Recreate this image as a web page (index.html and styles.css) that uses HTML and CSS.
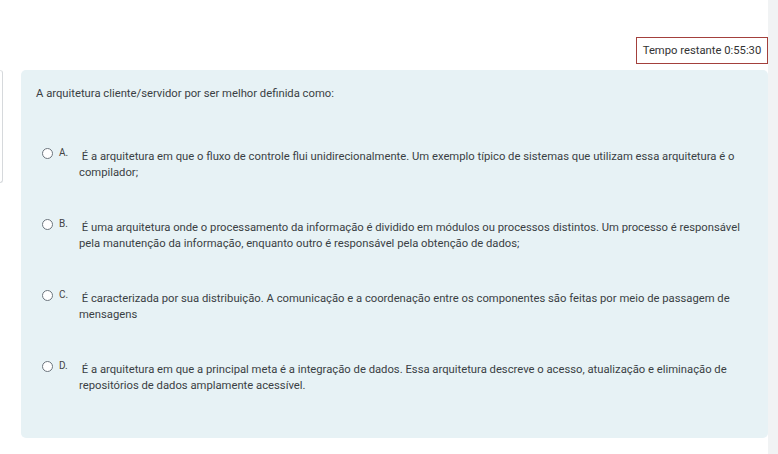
FILE: index.html
```html
<!DOCTYPE html>
<html lang="pt">
<head>
<meta charset="utf-8">
<link rel="stylesheet" href="styles.css">
</head>
<body>
<div class="page">
  <main class="main">
    <div class="topbar">
      <div class="timer">Tempo restante 0:55:30</div>
    </div>
    <div class="content">
      <div class="sidebox"></div>
      <section class="card">
        <p class="question">A arquitetura cliente/servidor por ser melhor definida como:</p>
        <ul class="options">
          <li class="option">
            <span class="radio"></span>
            <span class="letter">A.</span>
            <span class="text">&nbsp;É a arquitetura em que o fluxo de controle flui unidirecionalmente. Um exemplo típico de sistemas que utilizam essa arquitetura é o compilador;</span>
          </li>
          <li class="option">
            <span class="radio"></span>
            <span class="letter">B.</span>
            <span class="text">&nbsp;É uma arquitetura onde o processamento da informação é dividido em módulos ou processos distintos. Um processo é responsável pela manutenção da informação, enquanto outro é responsável pela obtenção de dados;</span>
          </li>
          <li class="option">
            <span class="radio"></span>
            <span class="letter">C.</span>
            <span class="text">&nbsp;É caracterizada por sua distribuição. A comunicação e a coordenação entre os componentes são feitas por meio de passagem de mensagens</span>
          </li>
          <li class="option">
            <span class="radio"></span>
            <span class="letter">D.</span>
            <span class="text">&nbsp;É a arquitetura em que a principal meta é a integração de dados. Essa arquitetura descreve o acesso, atualização e eliminação de repositórios de dados amplamente acessível.</span>
          </li>
        </ul>
      </section>
    </div>
  </main>
  <div class="scrollstrip"></div>
</div>
</body>
</html>
```
FILE: styles.css
```css
html, body {
  margin: 0;
  padding: 0;
  background: #ffffff;
}
body {
  font-family: Roboto, "Liberation Sans", Arial, sans-serif;
  color: #3a3f44;
  font-size: 11.25px;
}
.page {
  display: flex;
  height: 454px;
  overflow: hidden;
}
.main {
  flex: 1;
  display: flex;
  flex-direction: column;
}
.scrollstrip {
  width: 10px;
  background: #f1f3f4;
}
.topbar {
  display: flex;
  justify-content: flex-end;
  padding-top: 37px;
  height: 27px;
}
.timer {
  border: 1px solid #a3403c;
  box-sizing: border-box;
  height: 27px;
  width: 132px;
  display: flex;
  align-items: center;
  justify-content: center;
  font-size: 11.25px;
  color: #333;
}
.content {
  display: flex;
  align-items: flex-start;
  margin-top: 6px;
}
.sidebox {
  width: 3px;
  height: 113px;
  border: 1px solid #d6d9dc;
  border-left: none;
  border-top-color: #e2e4e6;
  border-radius: 0 3px 3px 0;
  box-sizing: border-box;
  flex-shrink: 0;
}
.card {
  margin-left: 18px;
  flex: 1;
  background: #e7f2f5;
  border-radius: 5px;
  height: 368px;
  box-sizing: border-box;
  padding: 16px 24px 0 15px;
}
.question {
  margin: 0;
  line-height: 16px;
}
.options {
  list-style: none;
  margin: 46px 0 0 6px;
  padding: 0;
  display: flex;
  flex-direction: column;
  gap: 38px;
}
.option {
  display: grid;
  grid-template-columns: 12px 25px 1fr;
  line-height: 16px;
}
.radio {
  width: 11px;
  height: 11px;
  border: 1px solid #6c757d;
  border-radius: 50%;
  background: #fff;
  box-sizing: border-box;
}
.letter {
  font-size: 10px;
  line-height: 10px;
  padding-left: 5px;
  color: #444;
}
.text {
  padding-top: 1px;
}
```
